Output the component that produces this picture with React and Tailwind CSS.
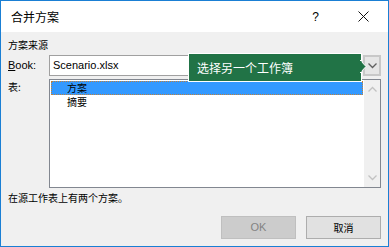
import React from 'react'

const cjk = { fontFamily: '"Noto Sans CJK SC", "Noto Sans", sans-serif' }
const latin = { fontFamily: '"Liberation Sans", "Noto Sans CJK SC", sans-serif' }

function Chevron({ dir = 'down', color = '#606060' }) {
  return (
    <svg width="9" height="6" viewBox="0 0 9 6">
      {dir === 'down'
        ? <polyline points="0.5,0.5 4.5,4.5 8.5,0.5" fill="none" stroke={color} strokeWidth="1.3" />
        : <polyline points="0.5,5.5 4.5,1.5 8.5,5.5" fill="none" stroke={color} strokeWidth="1.3" />}
    </svg>
  )
}

export default function App() {
  return (
    <div className="relative w-[389px] h-[247px] border border-[#1a7fd4] bg-[#f0f0f0] flex flex-col text-black overflow-hidden" style={cjk}>

      {/* Title bar */}
      <div className="h-[31px] bg-white flex items-center pl-[10px] pr-[19px]">
        <span className="text-[12px] leading-none flex-1">合并方案</span>
        <span className="text-[12px] leading-none mr-[39px]" style={latin}>?</span>
        <svg width="11" height="11" viewBox="0 0 11 11">
          <line x1="0.5" y1="0.5" x2="10.5" y2="10.5" stroke="#111" strokeWidth="1" />
          <line x1="10.5" y1="0.5" x2="0.5" y2="10.5" stroke="#111" strokeWidth="1" />
        </svg>
      </div>

      {/* Body */}
      <div className="flex-1 px-[7px] flex flex-col">
        <div className="mt-[5px] h-[16px] leading-[16px] text-[10px]">方案来源</div>

        {/* Book row */}
        <div className="mt-[2px] h-[21px] flex items-center">
          <span className="w-[41px] text-[11px]" style={latin}><span className="underline">B</span>ook:</span>
          <div className="w-[312px] h-[21px] bg-white border border-[#a0a0a0] flex items-center pl-[3px] text-[11px]" style={latin}>
            Scenario.xlsx
          </div>
          <div className="ml-[2px] w-[18px] h-[21px] border-2 border-[#c8c8c8] bg-[#e6e6e6] flex items-center justify-center">
            <Chevron />
          </div>
        </div>

        {/* List row */}
        <div className="mt-[3px] flex">
          <span className="w-[41px] text-[10px] leading-[14px] pt-[1px]">表:</span>
          <div className="flex-1 h-[109px] border border-[#828790] bg-white flex">
            <div className="flex-1 p-[1px] text-[10px]">
              <div className="h-[14px] bg-[#3399ff] border border-dotted border-[#c0803a] flex items-center pl-[15px] leading-none">方案</div>
              <div className="h-[14px] flex items-center pl-[16px] leading-none">摘要</div>
            </div>
            <div className="w-[16px] bg-[#f0f0f0] flex flex-col items-center justify-between py-[6px]">
              <Chevron dir="up" color="#c2c2c2" />
              <Chevron dir="down" color="#c2c2c2" />
            </div>
          </div>
        </div>

        <div className="mt-[2px] h-[16px] leading-[16px] text-[10px]">在源工作表上有两个方案。</div>

        {/* Buttons */}
        <div className="mt-[10px] flex justify-end gap-[10px]">
          <div className="w-[75px] h-[23px] bg-[#cccccc] border border-[#bfbfbf] flex items-center justify-center text-[11px] text-[#838383]" style={latin}>OK</div>
          <div className="w-[75px] h-[23px] bg-[#e1e1e1] border border-[#adadad] flex items-center justify-center text-[10px]">取消</div>
        </div>
      </div>

      {/* Tooltip overlay */}
      <div className="absolute left-[187px] top-[52px] w-[174px] h-[29px] bg-[#217346] border border-white flex items-center pl-[8px] text-white text-[12px] leading-none">
        选择另一个工作簿
      </div>
      <svg className="absolute left-[359px] top-[59px]" width="7" height="13" viewBox="0 0 7 13">
        <polygon points="0,0 6,6.5 0,13" fill="#217346" stroke="white" strokeWidth="1" />
        <rect x="0" y="1" width="1.5" height="11" fill="#217346" />
      </svg>
    </div>
  )
}
